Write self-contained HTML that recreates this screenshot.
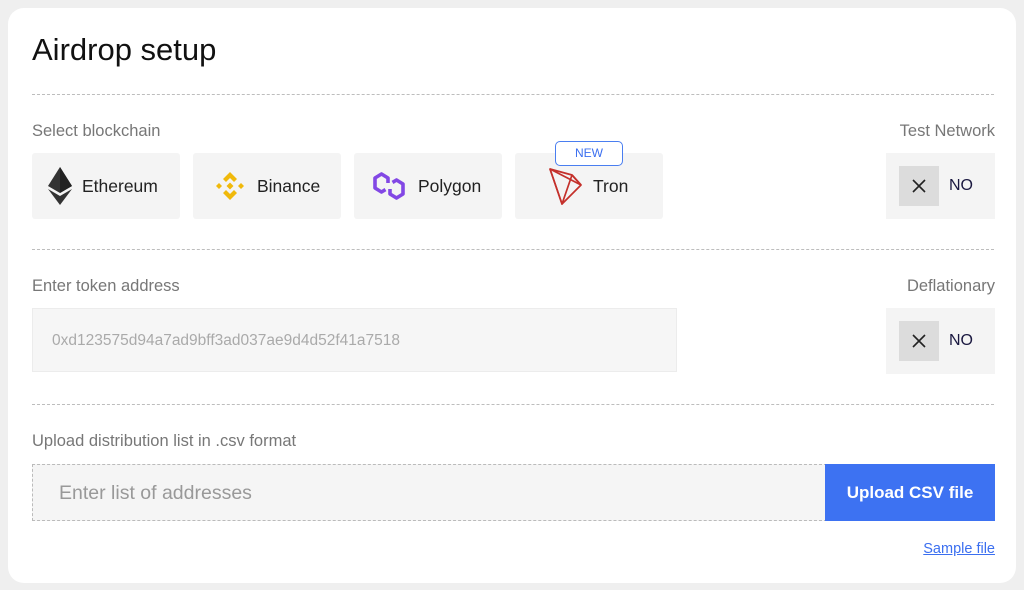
<!DOCTYPE html>
<html><head><style>
*{box-sizing:border-box;margin:0;padding:0}
body{width:1024px;height:590px;background:#efefef;font-family:"Liberation Sans","DejaVu Sans",sans-serif;position:relative;overflow:hidden}
.card{position:absolute;left:8px;top:8px;width:1008px;height:575px;background:#fff;border-radius:16px}
.a{position:absolute}
h1{position:absolute;left:32px;top:32px;font-size:31px;font-weight:400;color:#111}
.hr{position:absolute;left:32px;width:962px;border-top:1px dashed #bdbdbd}
.lbl{position:absolute;font-size:16.5px;color:#777}
.chip{position:absolute;top:153px;width:148px;height:66px;background:#f4f4f4;border-radius:3px;display:flex;align-items:center;font-size:17.5px;color:#222}
.chip svg{margin-left:16px;margin-right:10px}
.tog{position:absolute;left:886px;width:109px;height:66px;background:#f4f4f4}
.tog .x{position:absolute;left:13px;top:13px;width:40px;height:40px;background:#dcdcdc;display:flex;align-items:center;justify-content:center}
.tog .n{position:absolute;left:63px;top:24px;font-size:16px;color:#1a1840}
</style></head><body>
<div class="card"></div>
<h1>Airdrop setup</h1>
<div class="hr" style="top:94px"></div>
<div class="lbl" style="left:32px;top:122px">Select blockchain</div>
<div class="lbl" style="right:29px;top:122px">Test Network</div>
<div class="chip" style="left:32px"><svg width="24" height="38" viewBox="0 0 24 38"><path d="M12 0L0 19l12 7 12-7z" fill="#333"/><path d="M12 0v26l12-7z" fill="#222"/><path d="M0 22l12 16 12-16-12 7z" fill="#333"/></svg>Ethereum</div>
<div class="chip" style="left:193px"><svg width="34" height="34" viewBox="0 0 34 34" fill="#f0b90b" style="margin-left:20px"><path d="M17 3l7 7-3 3-4-4-4 4-3-3z"/><path d="M3 17l3-3 3 3-3 3z"/><path d="M25 17l3-3 3 3-3 3z"/><path d="M17 31l-7-7 3-3 4 4 4-4 3 3z"/><path d="M17 13.5l3.5 3.5-3.5 3.5-3.5-3.5z"/></svg>Binance</div>
<div class="chip" style="left:354px"><svg width="38" height="32" viewBox="0 0 38 32" fill="none" stroke="#8247e5" stroke-width="3.6" stroke-linejoin="round"><path d="M18 13V8l-6.5-4L5 8v10l6.5 4 4-2.4"/><path d="M20 19v5l6.5 4 6.5-4V14l-6.5-4-4 2.4"/></svg>Polygon</div>
<div class="chip" style="left:515px"><svg width="34" height="38" viewBox="0 0 34 38" fill="none" stroke="#c4302b" stroke-width="1.7" stroke-linejoin="round" style="margin-left:34px"><path d="M1 2l22 6 9 10L13 37z"/><path d="M1 2l12 35 10-29"/><path d="M23 8l9 10"/><path d="M1 2l31 16"/></svg>Tron</div>
<div class="a" style="left:555px;top:141px;width:68px;height:25px;border:1px solid #4a7ef0;border-radius:5px;background:#fff;color:#3b6ff0;font-size:12px;text-align:center;line-height:23px">NEW</div>
<div class="tog" style="top:153px"><div class="x"><svg width="16" height="16"><path d="M2 2l12 12M14 2L2 14" stroke="#222" stroke-width="1.6"/></svg></div><div class="n">NO</div></div>
<div class="hr" style="top:249px"></div>
<div class="lbl" style="left:32px;top:277px">Enter token address</div>
<div class="lbl" style="right:29px;top:277px">Deflationary</div>
<div class="a" style="left:32px;top:308px;width:645px;height:64px;background:#f6f6f6;border:1px solid #ececec;font-size:15.5px;color:#aaa;padding:23px 0 0 19px">0xd123575d94a7ad9bff3ad037ae9d4d52f41a7518</div>
<div class="tog" style="top:308px"><div class="x"><svg width="16" height="16"><path d="M2 2l12 12M14 2L2 14" stroke="#222" stroke-width="1.6"/></svg></div><div class="n">NO</div></div>
<div class="hr" style="top:404px"></div>
<div class="lbl" style="left:32px;top:432px">Upload distribution list in .csv format</div>
<div class="a" style="left:32px;top:464px;width:795px;height:57px;background:#f5f5f5;border:1px dashed #bbb;font-size:19.5px;color:#999;padding:17px 0 0 26px">Enter list of addresses</div>
<div class="a" style="left:825px;top:464px;width:170px;height:57px;background:#3d72f2;color:#fff;font-size:17px;font-weight:700;text-align:center;line-height:57px">Upload CSV file</div>
<div class="a" style="right:29px;top:541px;font-size:14.5px;color:#3b6ff0;text-decoration:underline">Sample file</div>
</body></html>
